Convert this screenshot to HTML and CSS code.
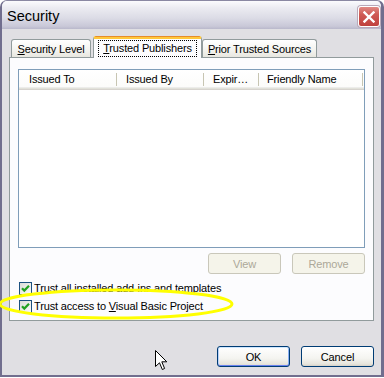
FILE: index.html
```html
<!DOCTYPE html>
<html>
<head>
<meta charset="utf-8">
<title>Security</title>
<link rel="stylesheet" href="styles.css">
</head>
<body>
<div class="screen">
  <div class="window">
    <div class="titlebar">
      <span class="title">Security</span>
      <div class="close">
        <svg width="12" height="12" viewBox="0 0 12 12"><path d="M1.5 1.5L10.5 10.5M10.5 1.5L1.5 10.5" stroke="#fff" stroke-width="2.4" stroke-linecap="square" fill="none"/></svg>
      </div>
    </div>
    <div class="client">
      <div class="tabs">
        <div class="tab tab-level"><u>S</u>ecurity Level</div>
        <div class="tab tab-pub active"><span class="focus"><u>T</u>rusted Publishers</span></div>
        <div class="tab tab-prior"><u>P</u>rior Trusted Sources</div>
      </div>
      <div class="panel">
        <div class="list">
          <div class="header">
            <div class="col c1">Issued To</div>
            <div class="col c2">Issued By</div>
            <div class="col c3">Expir…</div>
            <div class="col c4">Friendly Name</div>
          </div>
        </div>
        <div class="list-buttons">
          <div class="btn disabled">View</div>
          <div class="btn disabled">Remove</div>
        </div>
        <div class="check">
          <span class="box"><svg width="11" height="11" viewBox="0 0 11 11"><path d="M2 5.2L4.3 7.6L9 2.8" stroke="#21a121" stroke-width="2.2" fill="none"/></svg></span>
          <span>Trust all installed add-ins and templates</span>
        </div>
        <div class="check">
          <span class="box"><svg width="11" height="11" viewBox="0 0 11 11"><path d="M2 5.2L4.3 7.6L9 2.8" stroke="#21a121" stroke-width="2.2" fill="none"/></svg></span>
          <span>Trust access to <u>V</u>isual Basic Project</span>
        </div>
      </div>
      <div class="dialog-buttons">
        <div class="btn default">OK</div>
        <div class="btn">Cancel</div>
      </div>
    </div>
  </div>
  <svg class="highlight" width="240" height="40" viewBox="0 0 240 40"><ellipse cx="118" cy="18" rx="116" ry="14" fill="none" stroke="#ffff00" stroke-width="3"/></svg>
  <svg class="cursor" width="14" height="22" viewBox="0 0 14 22"><path d="M0.5 0.5L0.5 16.5L4.5 12.8L7.3 19.5L9.6 18.5L6.8 11.8L11.8 11.8Z" fill="#fff" stroke="#000" stroke-width="1" stroke-linejoin="miter"/></svg>
</div>
</body>
</html>
```

FILE: styles.css
```css
* { box-sizing: border-box; }
html, body { margin: 0; padding: 0; background: #ffffff; }
body {
  font-family: "Liberation Sans", Arial, sans-serif;
  font-size: 11px;
  letter-spacing: -0.15px;
  color: #000;
}
.screen { position: relative; width: 384px; height: 378px; }

.window {
  width: 384px;
  height: 377px;
  background: #e0dfe3;
  border-top: 1px solid #8a88a2;
  border-left: 2px solid #716e8e;
  border-right: 3px solid #716e8e;
  border-bottom: 2px solid #716e8e;
  border-radius: 7px 7px 0 0;
  display: flex;
  flex-direction: column;
}

.titlebar {
  height: 28px;
  display: flex;
  justify-content: space-between;
  align-items: flex-start;
  padding: 0 1px 0 5px;
  background: linear-gradient(#fbfbfd 0%, #ebebf1 25%, #dcdce6 60%, #c9c8d8 90%, #b9b8cb 100%);
  border-radius: 5px 5px 0 0;
}
.title {
  font-size: 14.5px;
  letter-spacing: 0;
  line-height: 14px;
  margin-top: 8px;
  color: #000;
}
.close {
  width: 22px;
  height: 21px;
  margin-top: 5px;
  border: 1px solid #fff;
  border-radius: 3px;
  background: linear-gradient(#e08a84 0%, #cf5a54 40%, #c0413e 100%);
  box-shadow: 0 0 0 1px #b8a8b8;
  display: flex;
  align-items: center;
  justify-content: center;
}

.client {
  flex: 1;
  display: flex;
  flex-direction: column;
  padding: 7px 7px 8px 7px;
}

.tabs {
  height: 21px;
  display: flex;
  align-items: flex-end;
  padding-left: 2px;
  position: relative;
  z-index: 1;
}
.tab {
  height: 18px;
  border: 1px solid #919b9c;
  border-bottom: none;
  border-radius: 3px 3px 0 0;
  background: linear-gradient(#ffffff, #f3f3ef 60%, #e8e7e0);
  display: flex;
  align-items: center;
  justify-content: center;
  white-space: nowrap;
  padding-top: 1px;
}
.tab-level { width: 80px; margin-right: 2px; }
.tab-pub { width: 109px; }
.tab-prior { width: 115px; }
.tab.active {
  height: 22px;
  margin-bottom: -1px;
  background: #fcfcfe;
  border-top: 3px solid #ffc83c;
  padding-top: 0;
  position: relative;
}
.tab.active::before {
  content: "";
  position: absolute;
  left: 1px; right: 1px; top: -3px;
  height: 1px;
  background: #e68b2c;
  border-radius: 2px 2px 0 0;
}
.focus {
  border: 1px dotted #000;
  padding: 1px 4px 2px 4px;
  line-height: 12px;
  margin-top: -1px;
}

.panel {
  height: 264px;
  border: 1px solid #919b9c;
  background: #fcfcfe;
  padding: 11px 8px 5px 8px;
  display: flex;
  flex-direction: column;
}
.list {
  height: 179px;
  border: 1px solid #7f9db9;
  background: #fff;
}
.header {
  height: 20px;
  display: flex;
  background: linear-gradient(#ffffff, #fbfbf9);
  box-shadow: inset 0 -1px #d6d3ce, inset 0 -2px #e2e2da, inset 0 -3px #ececea;
}
.col {
  position: relative;
  line-height: 19px;
  white-space: nowrap;
  padding-left: 9px;
}
.col::after {
  content: "";
  position: absolute;
  right: 0; top: 3px;
  width: 1px; height: 13px;
  background: #c7c5b2;
}
.c1 { width: 98px; padding-left: 10px; }
.c2 { width: 87px; }
.c3 { width: 55px; }
.c4 { width: 104px; padding-left: 8px; }

.list-buttons {
  margin-top: 5px;
  display: flex;
  justify-content: flex-end;
  gap: 11px;
}
.btn {
  width: 73px;
  height: 21px;
  border: 1px solid #003c74;
  border-radius: 3px;
  background: linear-gradient(#ffffff 0%, #f4f4f0 60%, #e6e4dc 90%, #d6d0c5 100%);
  display: flex;
  align-items: center;
  justify-content: center;
  color: #000;
}
.btn.disabled {
  border-color: #c9c7ba;
  background: #f5f4ea;
  color: #aca899;
}
.btn.default {
  box-shadow: inset 0 1px #cee7ff, inset 0 -1px #6982ee, inset 1px 0 #b9d1fa, inset -1px 0 #8ab0f4;
}

.check {
  height: 18px;
  display: flex;
  align-items: center;
  white-space: nowrap;
}
.list-buttons + .check { margin-top: 5px; }
.box {
  width: 13px;
  height: 13px;
  margin-left: 1px;
  margin-right: 2px;
  border: 1px solid #1c5180;
  background: linear-gradient(135deg, #dcdcd7, #fbfbf9);
  display: flex;
  align-items: center;
  justify-content: center;
}

.dialog-buttons {
  margin-top: 25px;
  display: flex;
  justify-content: flex-end;
  gap: 11px;
}

.highlight { position: absolute; left: -2px; top: 286px; }
.cursor { position: absolute; left: 155px; top: 350px; }
```
